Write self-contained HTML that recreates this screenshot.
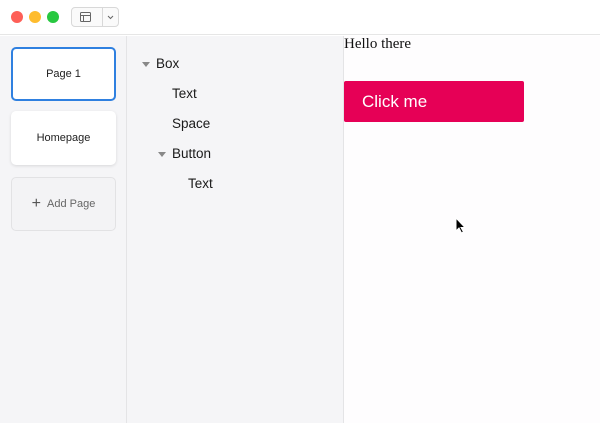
<!DOCTYPE html>
<html><head><meta charset="utf-8"><style>
*{margin:0;padding:0;box-sizing:border-box}
body{width:600px;height:423px;overflow:hidden;background:#fff;font-family:"Liberation Sans",sans-serif;position:relative}
.top{position:absolute;left:0;top:0;width:600px;height:35px;background:#fff;border-bottom:1px solid #e6e6e6}
.dot{position:absolute;top:11px;width:12px;height:12px;border-radius:50%}
.tb{position:absolute;left:71px;top:7px;width:48px;height:20px;border:1px solid #d8d8d8;border-radius:4px;background:#fafafa}
.left{position:absolute;left:0;top:36px;width:127px;height:387px;background:#f5f5f7;border-right:1px solid #e4e4e6}
.card{position:absolute;left:11px;width:105px;height:54px;background:#fff;border-radius:5px;font-size:11px;color:#222;display:flex;align-items:center;justify-content:center}
.mid{position:absolute;left:127px;top:36px;width:217px;height:387px;background:#f5f5f7;border-right:1px solid #e4e4e6}
.t{position:absolute;font-size:13.5px;color:#1a1a1a}
.tri{position:absolute;width:0;height:0;border-left:4px solid transparent;border-right:4px solid transparent;border-top:5px solid #888}
.right{position:absolute;left:344px;top:36px;right:0;bottom:0;background:#fefdfe}
</style></head><body>
<div class="top">
<div class="dot" style="left:11px;background:#fe5f57"></div>
<div class="dot" style="left:29px;background:#febc2e"></div>
<div class="dot" style="left:47px;background:#28c840"></div>
<div class="tb"><svg width="48" height="20" style="position:absolute;left:-1px;top:-1px"><rect x="9.5" y="5.5" width="10" height="9" rx="1" fill="none" stroke="#666"/><line x1="9.5" y1="8.5" x2="19.5" y2="8.5" stroke="#666"/><line x1="12.5" y1="8.5" x2="12.5" y2="14.5" stroke="#666"/><line x1="31.5" y1="1" x2="31.5" y2="19" stroke="#d8d8d8"/><path d="M37 9l2.5 2.5L42 9" fill="none" stroke="#666"/></svg></div>
</div>
<div class="left">
<div class="card" style="top:11px;border:2px solid #2f80e0">Page 1</div>
<div class="card" style="top:75px;box-shadow:0 1px 3px rgba(0,0,0,.12)">Homepage</div>
<div class="card" style="top:141px;background:#f3f3f5;border:1px solid #e2e2e4;color:#666"><span style="font-size:16px;margin-right:6px;color:#555">+</span>Add Page</div>
</div>
<div class="mid">
<div class="tri" style="left:15px;top:26px"></div><div class="t" style="left:29px;top:20px">Box</div>
<div class="t" style="left:45px;top:50px">Text</div>
<div class="t" style="left:45px;top:80px">Space</div>
<div class="tri" style="left:31px;top:116px"></div><div class="t" style="left:45px;top:110px">Button</div>
<div class="t" style="left:61px;top:140px">Text</div>
</div>
<div class="right">
<div style="font-family:'Liberation Serif',serif;font-size:15px;color:#111;position:absolute;left:0;top:0">Hello there</div>
<div style="position:absolute;left:0;top:45px;width:180px;height:41px;background:#e60056;border-radius:2px;color:#fff;font-size:17px;padding:11px 0 0 18px">Click me</div>
<svg style="position:absolute;left:111px;top:181px" width="12" height="18"><path d="M1 1v13l3-3 2.5 5 2-1-2.5-4.5H10z" fill="#000" stroke="#fff" stroke-width="1"/></svg>
</div>
</body></html>
